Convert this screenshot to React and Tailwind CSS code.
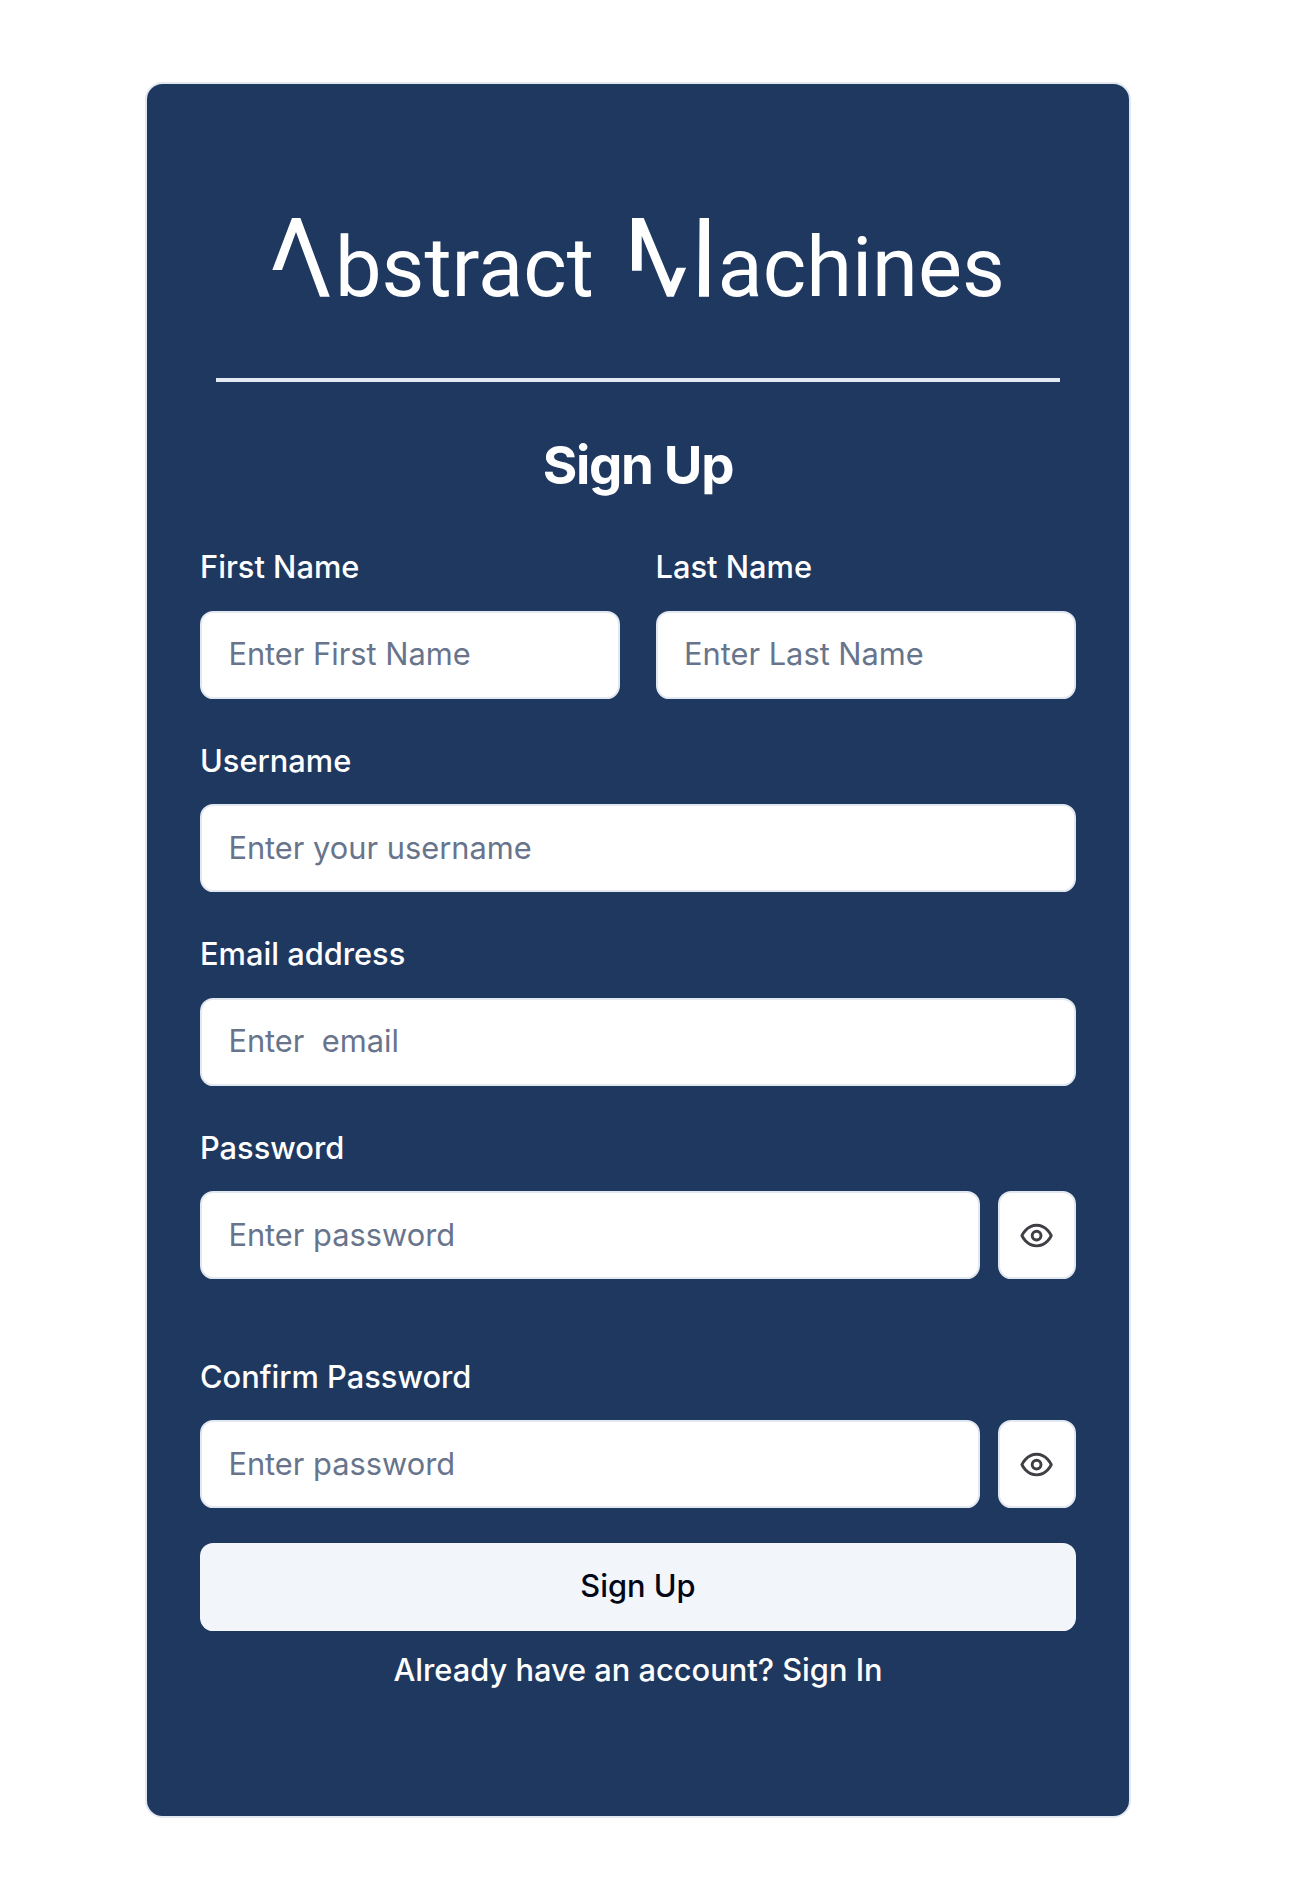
function Logo() {
  return (
    <svg
      viewBox="216 190 844 130"
      className="h-[130px] w-[844px]"
      role="img"
      aria-label="Abstract Machines"
      fill="#ffffff"
    >
      <path d="M272.3 270 292 218h8.4l29.4 78.8h-9.8L296 232l-14 38Z" />
      <text x="335" y="295.5" fontSize="83" className="font-[Roboto,sans-serif]">
        bstract
      </text>
      <path d="M632 218h11.7l27 64.3 6-14.6h9.4l-12.4 29h-6.7l-25.3-61v35H632Z" />
      <path d="M699.6 218h9.4v78.7h-10Z" />
      <text x="717.6" y="295.5" fontSize="83" className="font-[Roboto,sans-serif]">
        achines
      </text>
    </svg>
  );
}

function EyeIcon() {
  return (
    <svg
      viewBox="0 0 24 24"
      className="size-[35.2px]"
      fill="none"
      stroke="#3f3f46"
      strokeWidth="2"
      strokeLinecap="round"
      strokeLinejoin="round"
    >
      <path d="M2 12s3-7 10-7 10 7 10 7-3 7-10 7-10-7-10-7Z" />
      <circle cx="12" cy="12" r="3" />
    </svg>
  );
}

function Field({ label, placeholder, type = "text", reveal = false }) {
  return (
    <div className="flex min-w-0 flex-1 flex-col gap-[17.6px]">
      <label className="h-[52.8px] text-[30.8px] leading-[54px] font-medium text-white">{label}</label>
      <div className="flex gap-[17.6px]">
        <input
          type={type}
          placeholder={placeholder}
          className="h-[88px] min-w-0 flex-1 rounded-[13.2px] border-2 border-slate-200 bg-white px-[26.4px] pb-[2px] text-[30.8px] placeholder:text-[#67748c]"
        />
        {reveal && (
          <button
            type="button"
            className="flex h-[88px] w-[78.4px] items-center justify-center rounded-[13.2px] border-2 border-slate-200 bg-white pt-px"
          >
            <EyeIcon />
          </button>
        )}
      </div>
    </div>
  );
}

export default function App() {
  return (
    <main className="h-[1893px] bg-white pt-[82px] pl-[145px] font-[Inter,sans-serif]">
      <section className="flex h-[1736px] w-[986px] flex-col rounded-[17.6px] border-2 border-slate-200 bg-[#1f3860] px-[53px] pt-[106px]">
        <header className="flex flex-col items-center">
          <Logo />
          <div className="mt-[58px] h-1 w-[844px] bg-[#e4e8f0]" />
          <h1 className="mt-[50.5px] h-[64px] text-[52.8px] leading-[64px] font-bold tracking-tight text-white">
            Sign Up
          </h1>
        </header>
        <form className="mt-[43.7px] flex flex-col gap-[35.2px]">
          <div className="flex gap-[35.2px]">
            <Field label="First Name" placeholder="Enter First Name" />
            <Field label="Last Name" placeholder="Enter Last Name" />
          </div>
          <Field label="Username" placeholder="Enter your username" />
          <Field label="Email address" placeholder="Enter  email" />
          <Field label="Password" placeholder="Enter password" type="password" reveal />
          <div className="mt-[35.2px] flex">
            <Field label="Confirm Password" placeholder="Enter password" type="password" reveal />
          </div>
          <button
            type="button"
            className="h-[88px] rounded-[13.2px] bg-[#f2f5fa] pb-[2px] text-[30.8px] font-medium text-[#020817]"
          >
            Sign Up
          </button>
        </form>
        <p className="mt-[16.6px] text-center text-[30.8px] leading-[44px] font-medium text-white">
          Already have an account? <a>Sign In</a>
        </p>
      </section>
    </main>
  );
}
